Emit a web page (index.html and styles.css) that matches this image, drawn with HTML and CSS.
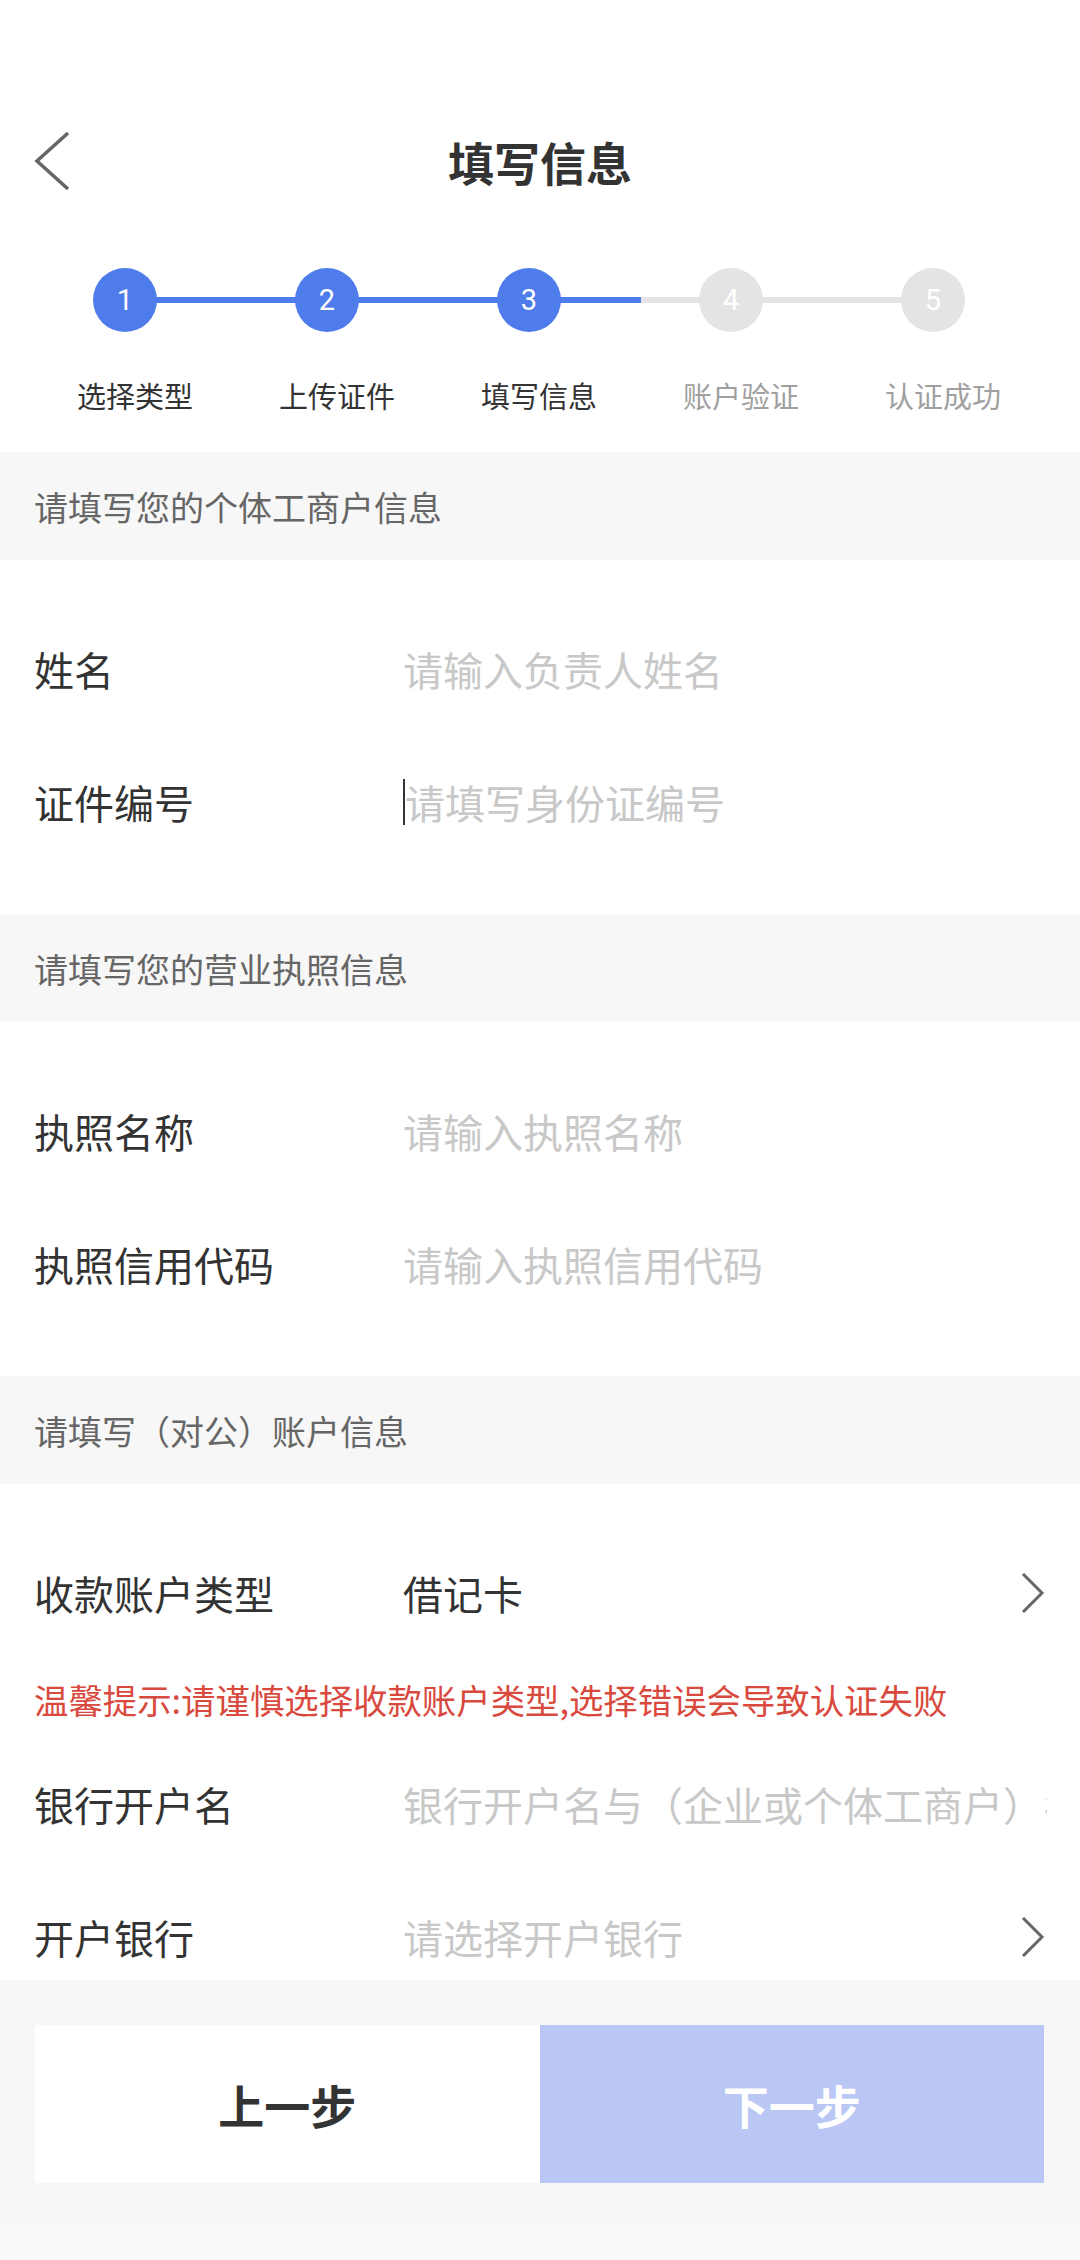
FILE: index.html
```html
<!DOCTYPE html>
<html lang="zh-CN">
<head>
    <meta charset="UTF-8">
    <meta name="viewport" content="width=device-width, initial-scale=1.0">
    <title>填写信息</title>
    <link rel="stylesheet" href="styles.css">
</head>
<body>
    <div class="page">
        <div class="content">
            <div class="navbar">
                <a class="back" href="#">
                    <svg width="36" height="58" viewBox="0 0 36 58"><polyline points="34,1 3,29 34,57" fill="none" stroke="#666" stroke-width="3.5"/></svg>
                </a>
                <h1>填写信息</h1>
                <span></span>
            </div>

            <div class="steps">
                <div class="track"><div class="track-fill"></div></div>
                <div class="step done"><span class="num">1</span><span class="name">选择类型</span></div>
                <div class="step done"><span class="num">2</span><span class="name">上传证件</span></div>
                <div class="step done"><span class="num">3</span><span class="name">填写信息</span></div>
                <div class="step"><span class="num">4</span><span class="name">账户验证</span></div>
                <div class="step"><span class="num">5</span><span class="name">认证成功</span></div>
            </div>

            <div class="band">请填写您的个体工商户信息</div>
            <div class="group">
                <div class="row">
                    <span class="label">姓名</span>
                    <span class="value placeholder">请输入负责人姓名</span>
                </div>
                <div class="row">
                    <span class="label">证件编号</span>
                    <span class="value placeholder"><i class="caret"></i>请填写身份证编号</span>
                </div>
            </div>

            <div class="band">请填写您的营业执照信息</div>
            <div class="group">
                <div class="row">
                    <span class="label">执照名称</span>
                    <span class="value placeholder">请输入执照名称</span>
                </div>
                <div class="row">
                    <span class="label">执照信用代码</span>
                    <span class="value placeholder">请输入执照信用代码</span>
                </div>
            </div>

            <div class="band">请填写（对公）账户信息</div>
            <div class="group">
                <div class="row">
                    <span class="label">收款账户类型</span>
                    <span class="value">借记卡</span>
                    <svg class="chevron" width="24" height="40" viewBox="0 0 24 40"><polyline points="2,1 21,20 2,39" fill="none" stroke="#666" stroke-width="3"/></svg>
                </div>
                <div class="tip">温馨提示:请谨慎选择收款账户类型,选择错误会导致认证失败</div>
                <div class="row">
                    <span class="label">银行开户名</span>
                    <span class="value placeholder clip">银行开户名与（企业或个体工商户）名称一致</span>
                </div>
                <div class="row">
                    <span class="label">开户银行</span>
                    <span class="value placeholder">请选择开户银行</span>
                    <svg class="chevron" width="24" height="40" viewBox="0 0 24 40"><polyline points="2,1 21,20 2,39" fill="none" stroke="#666" stroke-width="3"/></svg>
                </div>
            </div>
        </div>

        <footer class="footer">
            <div class="buttons">
                <button class="btn prev">上一步</button>
                <button class="btn next">下一步</button>
            </div>
        </footer>
        <div class="navstrip"></div>
    </div>
</body>
</html>
```

FILE: styles.css
```css
:root {
    --blue: #4e7cea;
    --blue-light: #bac7f4;
    --grey-line: #e4e4e4;
    --band-bg: #f7f7f7;
    --text: #333;
    --text-sub: #666;
    --text-muted: #a0a0a0;
    --placeholder: #c8c8c8;
    --red: #d9493e;
}

* {
    box-sizing: border-box;
}

body {
    margin: 0;
    font-family: "Noto Sans CJK SC", "Noto Sans", sans-serif;
    background: #fff;
    color: var(--text);
}

.page {
    width: 1080px;
    height: 2260px;
    display: flex;
    flex-direction: column;
    overflow: hidden;
}

.content {
    flex: 1;
    overflow: hidden;
}

/* top bar */
.navbar {
    margin-top: 100px;
    height: 122px;
    display: grid;
    grid-template-columns: 1fr auto 1fr;
    align-items: center;
}

.back {
    padding-left: 34px;
    display: flex;
    align-items: center;
}

.navbar h1 {
    margin: 0;
    font-size: 46px;
    font-weight: 700;
    color: var(--text);
    line-height: 1;
}

/* progress steps */
.steps {
    position: relative;
    display: grid;
    grid-template-columns: repeat(5, 202px);
    padding: 46px 0 37px 34px;
}

.track {
    position: absolute;
    top: 75px;
    left: 125px;
    width: 808px;
    height: 6px;
    background: var(--grey-line);
}

.track-fill {
    width: 516px;
    height: 100%;
    background: var(--blue);
}

.step {
    position: relative;
    display: flex;
    flex-direction: column;
    align-items: center;
}

.step .num {
    width: 64px;
    height: 64px;
    margin-right: 20px;
    border-radius: 50%;
    background: var(--grey-line);
    color: #fff;
    font-family: Roboto, "Noto Sans", sans-serif;
    font-size: 29px;
    display: flex;
    align-items: center;
    justify-content: center;
}

.step .name {
    margin-top: 43px;
    font-size: 29px;
    line-height: 40px;
    color: var(--text-muted);
}

.step.done .num {
    background: var(--blue);
}

.step.done .name {
    color: var(--text);
}

/* form */
.band {
    height: 108px;
    padding-left: 34px;
    display: flex;
    align-items: center;
    background: var(--band-bg);
    font-size: 34px;
    color: var(--text-sub);
}

.group {
    padding: 45px 0 43px;
}

.row {
    height: 133px;
    padding: 0 35px 6px 34px;
    display: flex;
    align-items: center;
    font-size: 40px;
}

.label {
    width: 369px;
    flex-shrink: 0;
    color: var(--text);
}

.value {
    flex: 1;
    color: var(--text);
    white-space: nowrap;
    display: flex;
    align-items: center;
}

.value.placeholder {
    color: var(--placeholder);
}

.value.clip {
    overflow: hidden;
    display: block;
    margin-right: -2px;
}

.caret {
    display: inline-block;
    width: 2px;
    height: 46px;
    background: var(--text);
}

.chevron {
    flex-shrink: 0;
}

.tip {
    height: 78px;
    padding: 0 0 4px 34px;
    display: flex;
    align-items: center;
    font-size: 34.4px;
    color: var(--red);
    white-space: nowrap;
}

/* bottom buttons */
.footer {
    height: 243px;
    background: var(--band-bg);
    padding: 45px 36px 0 35px;
}

.buttons {
    display: flex;
    height: 158px;
}

.btn {
    flex: 1;
    border: none;
    margin: 0;
    font-family: "Noto Sans CJK SC", sans-serif;
    font-size: 46px;
    font-weight: 700;
    cursor: pointer;
}

.btn.prev {
    background: #fff;
    color: var(--text);
}

.btn.next {
    background: var(--blue-light);
    color: #fff;
}

.navstrip {
    height: 37px;
    background: #fafafa;
}
```
